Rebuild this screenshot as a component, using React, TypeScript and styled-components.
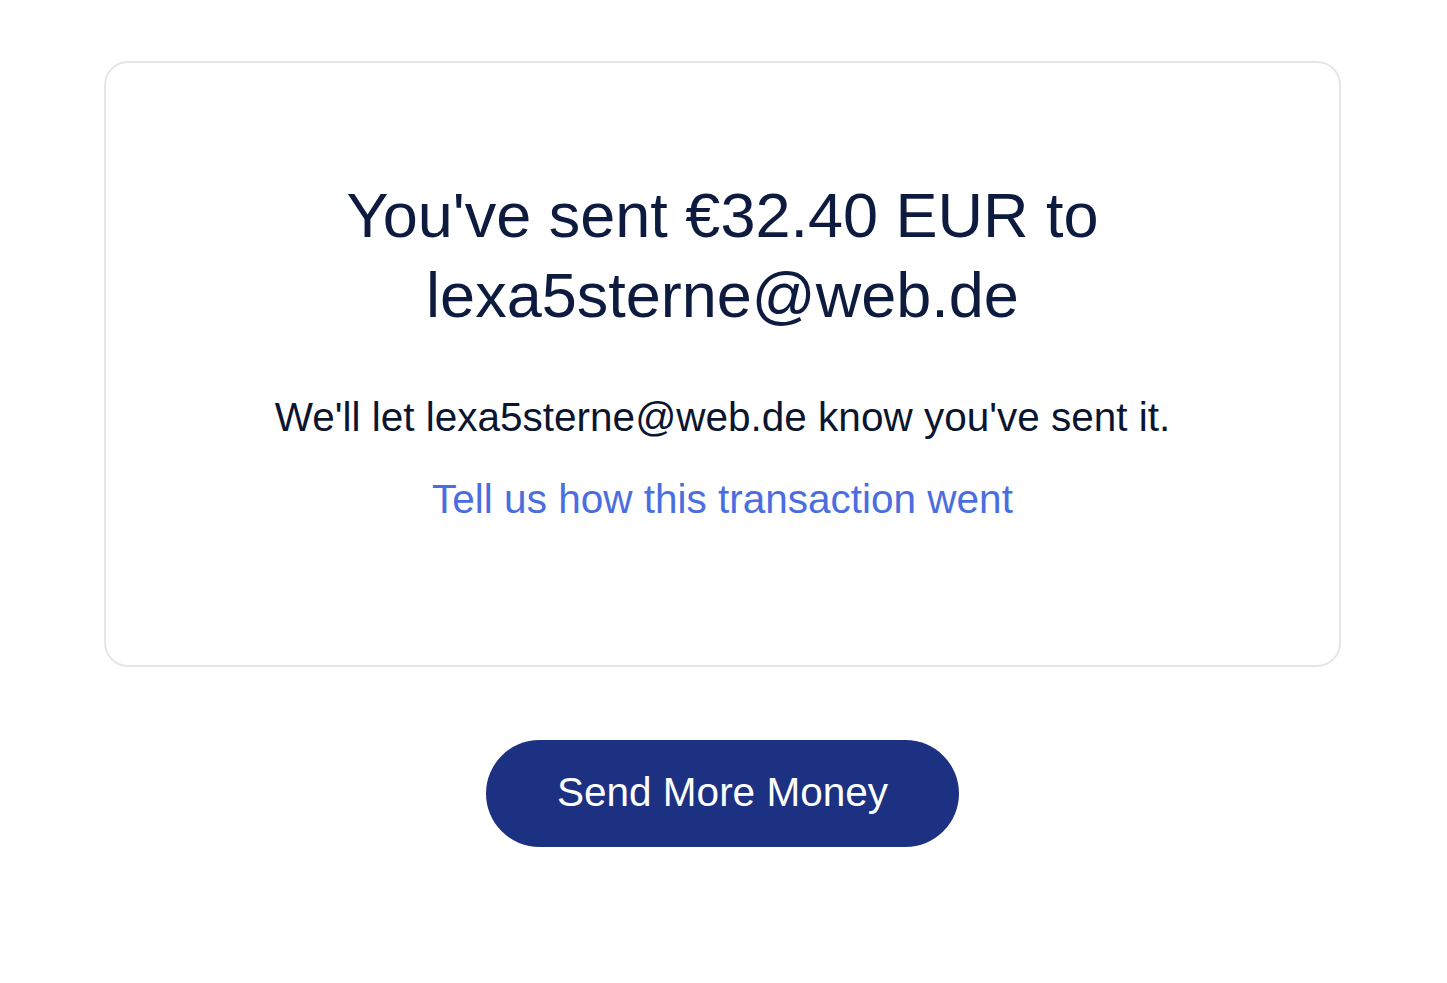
import React from "react";
import styled, { createGlobalStyle } from "styled-components";

const GlobalStyle = createGlobalStyle`
  html, body {
    margin: 0;
    padding: 0;
    background: #ffffff;
  }
  body {
    font-family: "Liberation Sans", Arial, sans-serif;
  }
`;

const Page = styled.main`
  display: flex;
  flex-direction: column;
  align-items: center;
  padding: 61px 106px 0 104px;
`;

const Card = styled.section`
  box-sizing: border-box;
  width: 100%;
  height: 606px;
  border: 2px solid #e6e6e6;
  border-radius: 24px;
  padding: 112px 40px 0;
  display: flex;
  flex-direction: column;
  align-items: center;
  text-align: center;
`;

const Heading = styled.h1`
  margin: 0;
  font-size: 63px;
  line-height: 80px;
  font-weight: 400;
  color: #0d1b3e;
  max-width: 820px;
`;

const Message = styled.p`
  margin: 52px 0 0;
  font-size: 40.5px;
  line-height: 60px;
  color: #0b1530;
`;

const FeedbackLink = styled.a`
  margin-top: 22px;
  font-size: 40.5px;
  line-height: 60px;
  color: #4a6ee0;
  text-decoration: none;
  cursor: pointer;
`;

const PrimaryButton = styled.button`
  margin-top: 73px;
  box-sizing: border-box;
  height: 107px;
  width: 473px;
  border: none;
  border-radius: 54px;
  background: #1d3183;
  color: #ffffff;
  font-family: "Liberation Sans", Arial, sans-serif;
  font-size: 40.5px;
  line-height: 1;
  padding: 0 0 2px;
  cursor: pointer;
`;

export default function App() {
  return (
    <>
      <GlobalStyle />
      <Page>
        <Card>
          <Heading>You've sent €32.40 EUR to lexa5sterne@web.de</Heading>
          <Message>We'll let lexa5sterne@web.de know you've sent it.</Message>
          <FeedbackLink href="#">Tell us how this transaction went</FeedbackLink>
        </Card>
        <PrimaryButton type="button">Send More Money</PrimaryButton>
      </Page>
    </>
  );
}
